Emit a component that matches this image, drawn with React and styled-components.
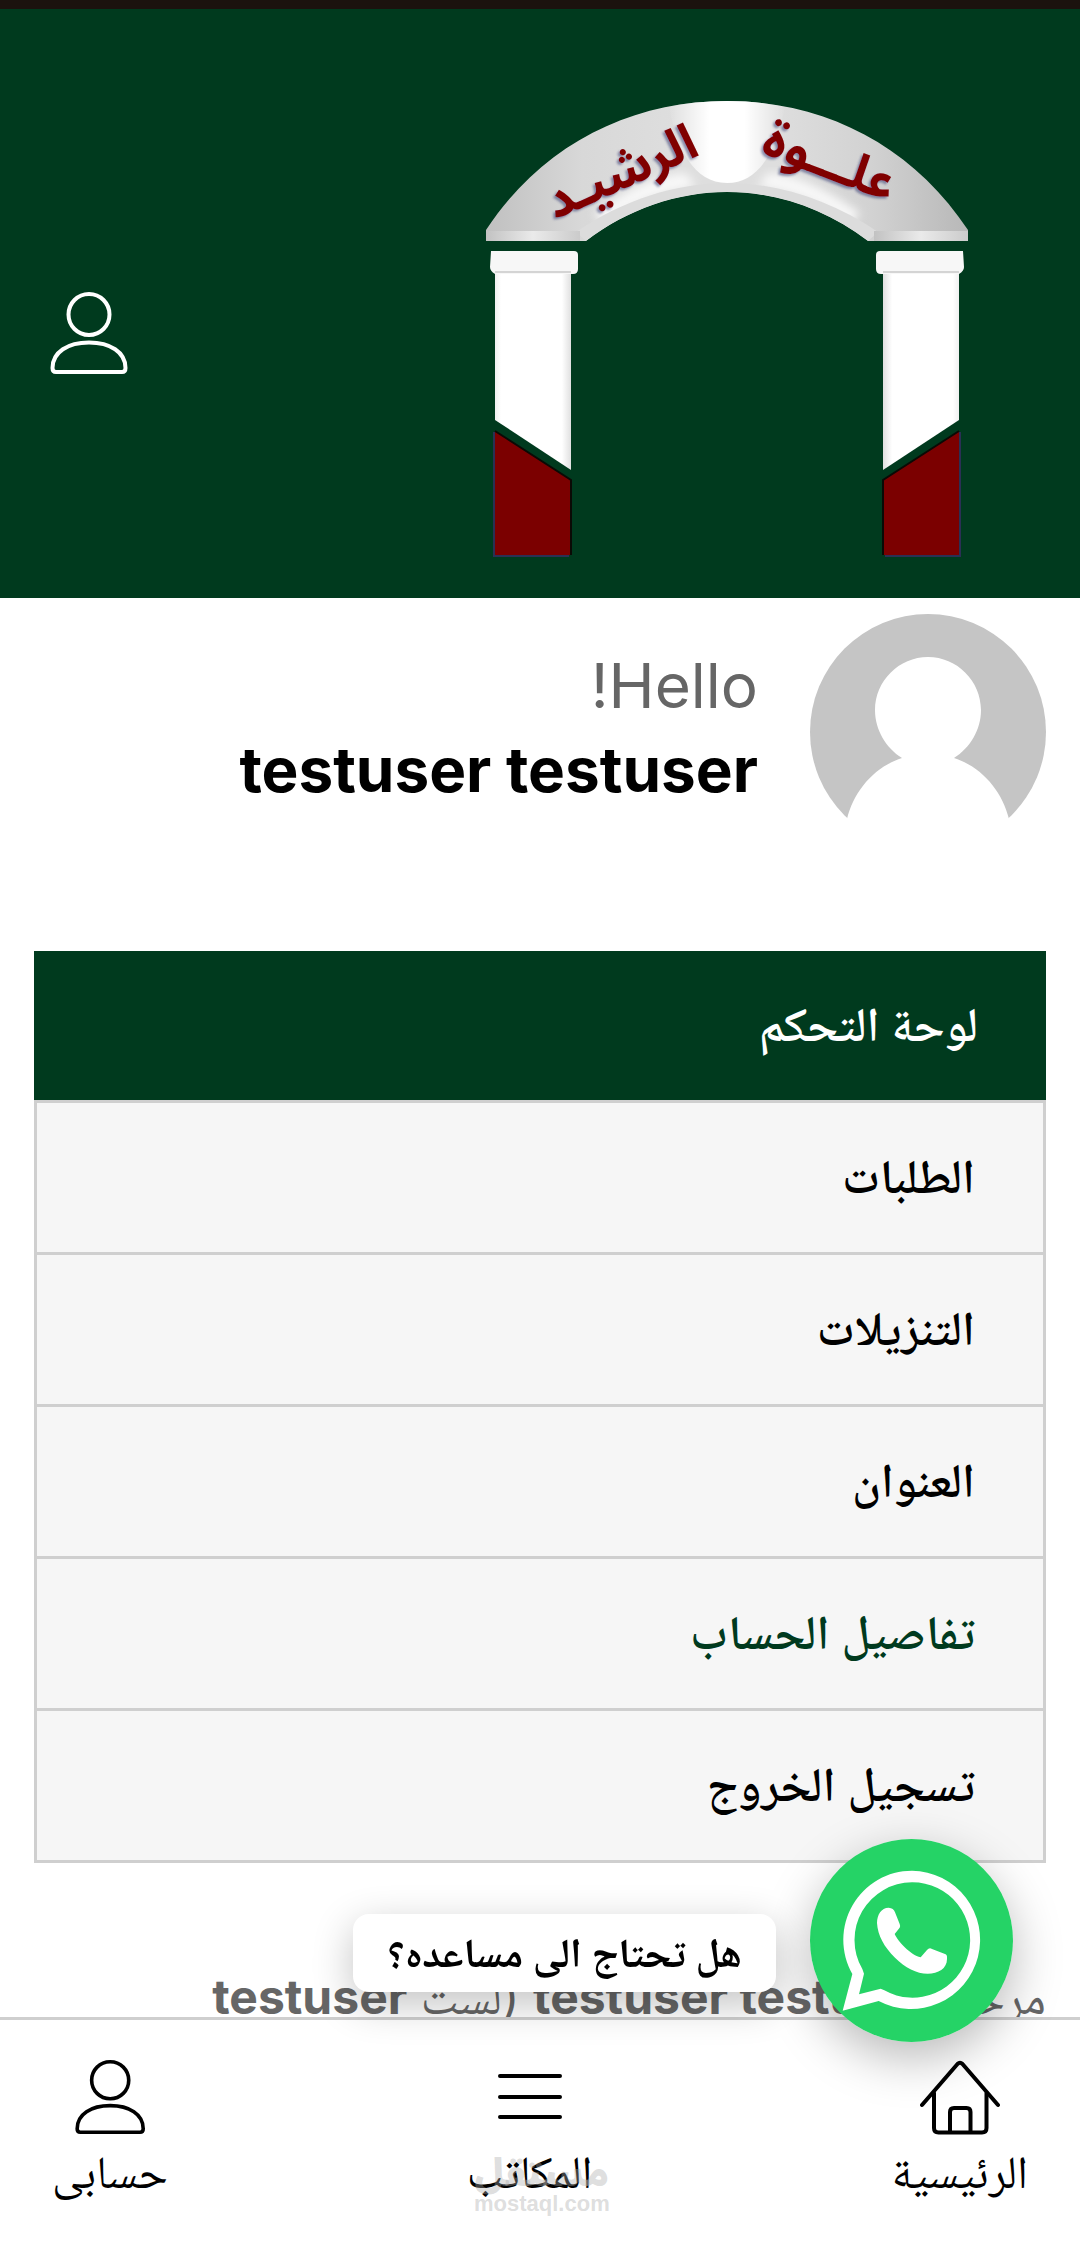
import React from 'react';
import styled, { createGlobalStyle } from 'styled-components';

const GlobalStyle = createGlobalStyle`
    * {
        box-sizing: border-box;
    }

    body {
        margin: 0;
        background: #fff;
        color: #666;
        font-family: Inter, 'Noto Naskh Arabic', 'DejaVu Sans', sans-serif;
        overflow-x: hidden;
    }

    a {
        color: inherit;
        text-decoration: none;
    }
`;

const Page = styled.div`
    direction: rtl;
    border-top: 9px solid #1b120e;
`;

const Header = styled.header`
    display: flex;
    align-items: center;
    justify-content: space-between;
    padding: 92px 112px 33px 49px;
    background: #003a1e;
    color: #fff;
`;

const IconLink = styled.a`
    display: block;
    line-height: 0;
`;

const Main = styled.main`
    padding: 16px 34px 0;
`;

const Profile = styled.section`
    display: flex;
    gap: 52px;
    height: 236px;
    margin-bottom: 101px;
`;

const Greeting = styled.div`
    display: flex;
    flex-direction: column;
    padding-top: 30px;
    font-size: 62px;
    line-height: 84px;
`;

const UserName = styled.strong`
    color: #000;
    font-weight: 700;
`;

const Menu = styled.ul`
    margin: 0 0 98px;
    padding: 0;
    list-style: none;
    background: #f6f6f6;
    border: 3px solid #cfcfcf;
    border-top: 0;
`;

const MenuItem = styled.li`
    border-top: 3px solid #cfcfcf;

    &:first-child {
        margin: 0 -3px;
        border-top: 0;
    }
`;

const MenuLink = styled.a`
    display: block;
    padding: 37px 68px 40px;
    background: ${(props) => (props.$active ? '#003a1e' : 'transparent')};
    color: ${(props) => (props.$active ? '#fff' : props.$hover ? '#003a1e' : '#000')};
    font-size: 48px;
    font-weight: 600;
    line-height: 72px;
`;

const Welcome = styled.p`
    margin: 0;
    font-size: 48px;
    line-height: 72px;
    white-space: nowrap;

    strong {
        font-weight: 700;
    }
`;

const BottomNav = styled.nav`
    position: fixed;
    inset: auto 0 0 0;
    display: flex;
    justify-content: space-between;
    padding: 39px 52px 56px;
    background: #fff;
    border-top: 3px solid #cfcfcf;
`;

const NavLink = styled.a`
    display: flex;
    flex-direction: column;
    align-items: center;
    gap: 4px;
    color: #000;
    font-size: 46px;
    line-height: 64px;
`;

const Watermark = styled.div`
    position: absolute;
    top: 134px;
    left: 474px;
    display: flex;
    flex-direction: column;
    align-items: center;
    color: rgba(170, 170, 170, 0.4);
    font-family: 'Liberation Sans', 'Noto Sans Arabic', 'DejaVu Sans', sans-serif;
    font-size: 22px;
    font-weight: 700;
    line-height: 24px;
    pointer-events: none;

    b {
        font-size: 38px;
        line-height: 38px;
    }
`;

const Help = styled.a`
    position: fixed;
    right: 67px;
    bottom: 217px;
    z-index: 2;
    display: flex;
    align-items: center;
    gap: 34px;
`;

const HelpBubble = styled.span`
    margin-top: 24px;
    padding: 6px 34px 8px;
    border-radius: 16px;
    background: #fff;
    box-shadow: 0 12px 40px rgba(0, 0, 0, 0.24);
    color: #000;
    font-size: 41px;
    font-weight: 700;
    line-height: 64px;
`;

const HelpCircle = styled.span`
    border-radius: 50%;
    box-shadow: 0 16px 50px rgba(0, 0, 0, 0.28);
    line-height: 0;
`;

function UserIcon({ height }) {
    return (
        <svg height={height} viewBox="0 0 80 84" fill="none" stroke="currentColor" strokeWidth="4" strokeLinejoin="round">
            <circle cx="40" cy="23.500" r="20.500" />
            <path d="M7 81C4.500 81 3.500 79.500 3.500 77C3.500 61 19 51.500 40 51.500S76.500 61 76.500 77C76.500 79.500 75.500 81 73 81Z" />
        </svg>
    );
}

function MenuIcon() {
    return (
        <svg width="80" height="76" viewBox="0 0 80 76" stroke="currentColor" strokeWidth="4" strokeLinecap="round">
            <path d="M10 17H70M10 38H70M10 58H70" />
        </svg>
    );
}

function HomeIcon() {
    return (
        <svg width="84" height="76" viewBox="0 0 84 76" fill="none" stroke="currentColor" strokeWidth="4" strokeLinecap="round" strokeLinejoin="round">
            <path d="M4 46L39.500 5Q42 2.500 44.500 5L80 46" />
            <path d="M16 34V69Q16 73.500 20.500 73.500H64Q68.500 73.500 68.500 69V34" />
            <path d="M32 73V53Q32 49 36 49H48.500Q52.500 49 52.500 53V73" />
        </svg>
    );
}

function AvatarIcon() {
    return (
        <svg width="236" height="236" viewBox="0 0 236 236">
            <circle cx="118" cy="118" r="118" fill="#c5c5c5" />
            <path
                fill="#fff"
                d="M118 43C147 43 171 67 171 96C171 116 160 134 144 144C172 153 192 177 199 205L206 236H30L37 205C44 177 64 153 92 144C76 134 65 116 65 96C65 67 89 43 118 43Z"
            />
        </svg>
    );
}

function WhatsappIcon() {
    return (
        <svg width="203" height="203" viewBox="90 57 609 609">
            <circle cx="394.500" cy="361.500" r="304.500" fill="#25d366" />
            <path
                fill="#fff"
                fillRule="evenodd"
                d="M396 152A207.500 207.500 0 1 1 296 543L188 572L217 462A207.500 207.500 0 0 1 396 152ZM396 187A173 173 0 0 0 247 447L252 461L237 523L302 506L313 511A173 173 0 1 0 396 187Z"
            />
            <path
                fill="#fff"
                d="M326 263C304 263 291 284 291 309C293 346 313 382 345 413C375 443 410 461 443 461C475 461 501 446 501 417V413Q502 403 493 401L456 387Q448 382 441 390L422 412C391 405 354 364 344 342L359 323Q362 319 359 312L345 277Q341 264 326 263Z"
            />
        </svg>
    );
}

function Logo() {
    return (
        <svg width="482" height="464" viewBox="0 0 482 464" role="img" aria-label="علوة الرشيد">
            <defs>
                <linearGradient id="stone" x1="0" x2="1">
                    <stop offset="0" stopColor="#c0c0c0" />
                    <stop offset="0.200" stopColor="#d8d8d8" />
                    <stop offset="0.400" stopColor="#dedede" />
                    <stop offset="0.600" stopColor="#dedede" />
                    <stop offset="0.800" stopColor="#d2d2d2" />
                    <stop offset="1" stopColor="#b8b8b8" />
                </linearGradient>
                <linearGradient id="foot" x1="0" x2="1">
                    <stop offset="0" stopColor="#c2c2c2" />
                    <stop offset="0.500" stopColor="#eaeaea" />
                    <stop offset="1" stopColor="#cbcbcb" />
                </linearGradient>
                <linearGradient id="glow" x1="0" x2="1">
                    <stop offset="0" stopColor="#fff" stopOpacity="0" />
                    <stop offset="0.350" stopColor="#fff" />
                    <stop offset="0.650" stopColor="#fff" />
                    <stop offset="1" stopColor="#fff" stopOpacity="0" />
                </linearGradient>
                <linearGradient id="pillar" x1="0" x2="1">
                    <stop offset="0" stopColor="#f0f0f0" />
                    <stop offset="0.080" stopColor="#fff" />
                    <stop offset="0.880" stopColor="#fff" />
                    <stop offset="1" stopColor="#e0e0e0" />
                </linearGradient>
                <filter id="soft">
                    <feGaussianBlur stdDeviation="5" />
                </filter>
                <filter id="lift">
                    <feDropShadow dx="-2" dy="2" stdDeviation="1" floodColor="#2a2f6b" floodOpacity="0.5" />
                </filter>
                <clipPath id="arch">
                    <path d="M0 129C56 44 144 0 241 0S426 44 482 129V140H382C340 108 290 91 241 91S142 108 100 140H0Z" />
                </clipPath>
            </defs>
            <g clipPath="url(#arch)">
                <rect width="482" height="140" fill="url(#stone)" />
                <path d="M108 112C150 82 175 74 200 72L210 86C180 90 150 100 118 124Z" fill="#f8f8f8" filter="url(#soft)" />
                <path d="M374 112C332 82 307 74 282 72L272 86C302 90 332 100 364 124Z" fill="#f8f8f8" filter="url(#soft)" />
                <path d="M100 140C142 108 192 91 241 91S340 108 382 140L392 131C345 99 292 82 241 82S137 99 90 131Z" fill="#dcdcdc" />
                <path d="M182 0H300C292 48 274 82 241 82S190 48 182 0Z" fill="url(#glow)" />
                <rect y="130" width="94" height="10" fill="url(#foot)" />
                <rect x="388" y="130" width="94" height="10" fill="url(#foot)" />
            </g>
            <g
                fill="#800006"
                filter="url(#lift)"
                fontFamily="'Noto Sans Arabic', 'DejaVu Sans', sans-serif"
                fontSize="50"
                fontWeight="700"
                textAnchor="middle"
            >
                <text transform="translate(142 86) rotate(-24)">الرشيـد</text>
                <text transform="translate(338 76) rotate(21)">علـــوة</text>
            </g>
            {[0, 1].map((side) => (
                <g key={side} transform={side ? 'translate(482 0) scale(-1 1)' : undefined}>
                    <path d="M9 170H85V369L9 319Z" fill="url(#pillar)" />
                    <path d="M5 150H88Q92 150 92 154V168Q92 173 87 173H9Q4 170 4 166Z" fill="#f7f7f7" />
                    <path d="M9 171H85" stroke="#d4d4d4" strokeWidth="2" />
                    <path d="M9 330L85 379V454H9Z" fill="#7b0000" />
                    <path d="M9 330L85 379V454" fill="none" stroke="#0a0a05" strokeWidth="2" />
                    <path d="M8 331V455H83" fill="none" stroke="#2b3054" strokeWidth="2" />
                </g>
            ))}
        </svg>
    );
}

const menuItems = [
    { label: 'لوحة التحكم', active: true },
    { label: 'الطلبات' },
    { label: 'التنزيلات' },
    { label: 'العنوان' },
    { label: 'تفاصيل الحساب', hover: true },
    { label: 'تسجيل الخروج' },
];

function App() {
    return (
        <Page>
            <GlobalStyle />
            <Header>
                <IconLink href="#home">
                    <Logo />
                </IconLink>
                <IconLink href="#account" aria-label="حسابى">
                    <UserIcon height={84} />
                </IconLink>
            </Header>
            <Main>
                <Profile>
                    <AvatarIcon />
                    <Greeting>
                        <span>Hello!</span>
                        <UserName>testuser testuser</UserName>
                    </Greeting>
                </Profile>
                <Menu>
                    {menuItems.map((item) => (
                        <MenuItem key={item.label}>
                            <MenuLink href="#" $active={item.active} $hover={item.hover}>
                                {item.label}
                            </MenuLink>
                        </MenuItem>
                    ))}
                </Menu>
                <Welcome>
                    مرحبا <strong>testuser testuser</strong> (لست <strong>testuser</strong>
                </Welcome>
            </Main>
            <Help href="#whatsapp">
                <HelpCircle>
                    <WhatsappIcon />
                </HelpCircle>
                <HelpBubble>هل تحتاج الى مساعده؟</HelpBubble>
            </Help>
            <BottomNav>
                <NavLink href="#home">
                    <HomeIcon />
                    الرئيسية
                </NavLink>
                <NavLink href="#offices">
                    <MenuIcon />
                    المكاتب
                </NavLink>
                <NavLink href="#account">
                    <UserIcon height={76} />
                    حسابى
                </NavLink>
                <Watermark>
                    <b>مستقل</b>
                    mostaql.com
                </Watermark>
            </BottomNav>
        </Page>
    );
}

export default App;
